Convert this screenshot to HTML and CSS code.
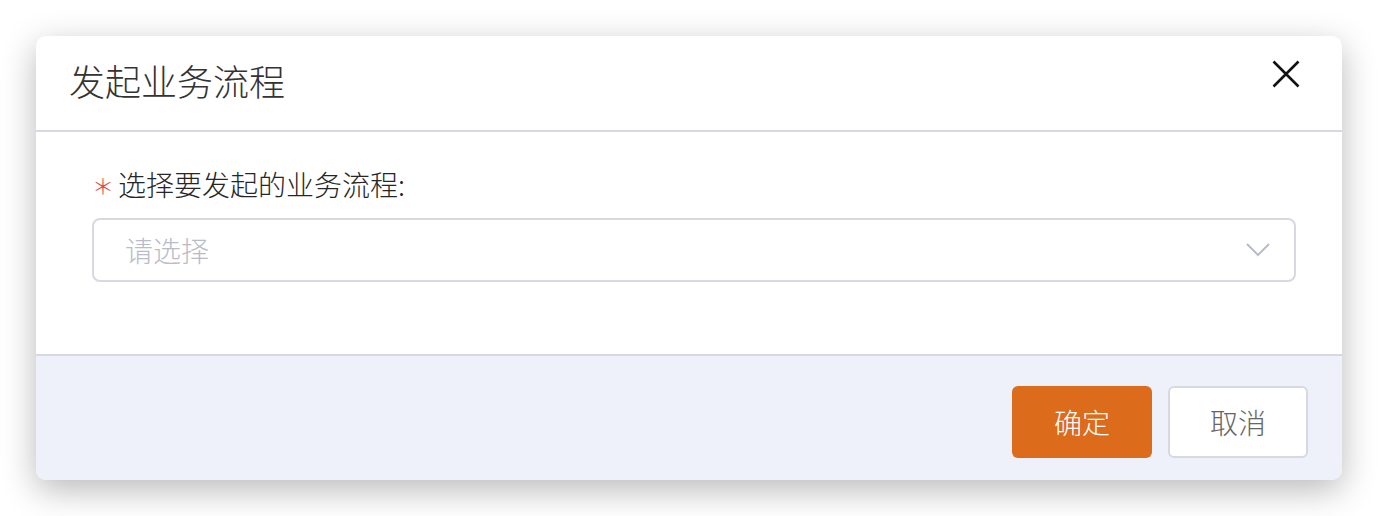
FILE: index.html
```html
<!DOCTYPE html>
<html lang="zh-CN">
<head>
    <meta charset="UTF-8">
    <meta name="viewport" content="width=device-width, initial-scale=1.0">
    <title>发起业务流程</title>
    <link rel="stylesheet" href="styles.css">
</head>
<body>

    <div class="dialog">
        <div class="dialog-header">
            <h2 class="dialog-title">发起业务流程</h2>
            <button class="close-btn" aria-label="关闭">
                <svg width="28" height="28" viewBox="0 0 28 28">
                    <path d="M1.5 1.5 L26.5 26.5 M26.5 1.5 L1.5 26.5" stroke="#111" stroke-width="2.6" fill="none"/>
                </svg>
            </button>
        </div>
        <div class="dialog-body">
            <div class="form-label"><span class="required">＊</span>选择要发起的业务流程:</div>
            <div class="select">
                <span class="placeholder">请选择</span>
                <svg class="arrow" width="24" height="14" viewBox="0 0 24 14">
                    <path d="M1 1 L12 12 L23 1" stroke="#b9bcc8" stroke-width="2" fill="none"/>
                </svg>
            </div>
        </div>
        <div class="dialog-footer">
            <button class="btn btn-primary">确定</button>
            <button class="btn btn-default">取消</button>
        </div>
    </div>

</body>
</html>
```

FILE: styles.css
```css
body {
    margin: 0;
    padding: 36px;
    background: #fff;
    font-family: "Noto Sans CJK SC", "Noto Sans", sans-serif;
}
.dialog {
    background: #fff;
    border-radius: 10px;
    box-shadow: 0 10px 34px rgba(0, 0, 0, 0.28);
    overflow: hidden;
}
.dialog-header {
    height: 94px;
    display: flex;
    align-items: center;
    justify-content: space-between;
    padding: 0 42px 0 33px;
    border-bottom: 2px solid #d8d8e2;
}
.dialog-title {
    margin: 0 0 6px;
    font-size: 36px;
    font-weight: 300;
    color: #333;
}
.close-btn {
    align-self: flex-start;
    margin-top: 24px;
    border: none;
    background: none;
    padding: 0;
    display: flex;
    cursor: pointer;
}
.dialog-body {
    height: 222px;
    padding: 32px 46px 0 56px;
    box-sizing: border-box;
}
.form-label {
    font-size: 28px;
    font-weight: 300;
    color: #262626;
    line-height: 40px;
    display: flex;
    align-items: center;
}
.required {
    color: #e0473c;
    font-size: 22px;
    width: 22px;
    margin-right: 4px;
}
.select {
    margin-top: 14px;
    height: 64px;
    border: 2px solid #d6d8e2;
    border-radius: 8px;
    box-sizing: border-box;
    display: flex;
    align-items: center;
    justify-content: space-between;
    padding: 0 24px 0 31px;
}
.placeholder {
    font-size: 28px;
    font-weight: 300;
    color: #b9bcc8;
}
.dialog-footer {
    background: #eef1f9;
    border-top: 2px solid #d8d8e2;
    height: 126px;
    box-sizing: border-box;
    display: flex;
    justify-content: flex-end;
    align-items: flex-start;
    gap: 16px;
    padding: 30px 34px 0;
}
.btn {
    width: 140px;
    height: 72px;
    font-family: inherit;
    font-size: 28px;
    font-weight: 300;
    border-radius: 6px;
    cursor: pointer;
}
.btn-primary {
    background: #dc6b1b;
    color: #fff;
    border: none;
}
.btn-default {
    background: #fff;
    color: #666;
    border: 2px solid #d6d8e2;
}
```
